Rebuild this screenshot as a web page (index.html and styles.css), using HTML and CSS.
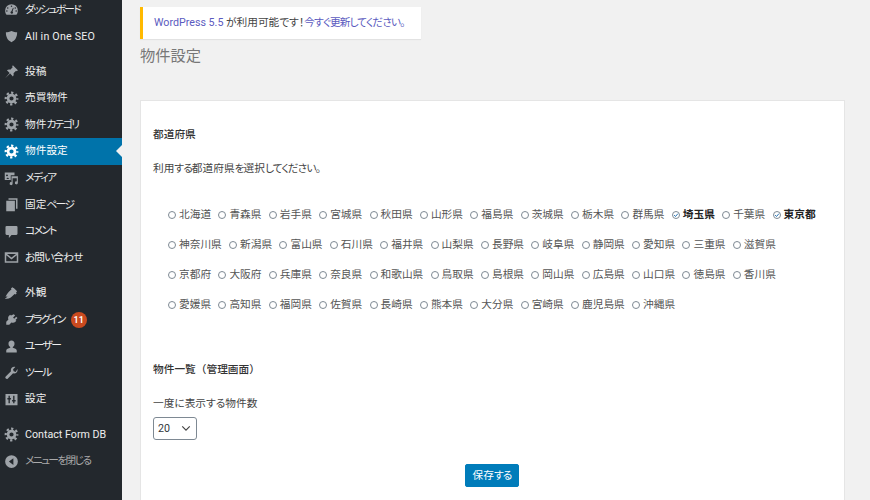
FILE: index.html
```html
<!DOCTYPE html>
<html lang="ja">
<head>
<meta charset="utf-8">
<title>物件設定</title>
<link rel="stylesheet" href="styles.css">
</head>
<body>
<svg class="sprite" width="0" height="0" aria-hidden="true">
  <symbol id="i-gear" viewBox="0 0 20 20">
    <circle cx="10" cy="10" r="4.6" fill="none" stroke="currentColor" stroke-width="3.6"/>
    <circle cx="10" cy="10" r="7.7" fill="none" stroke="currentColor" stroke-width="3" stroke-dasharray="3.05 3" stroke-dashoffset="1.5"/>
  </symbol>
  <symbol id="i-dash" viewBox="0 0 20 20">
    <path fill="currentColor" fill-rule="evenodd" d="M10 3a8.500 8.500 0 0 0-8.500 8.500c0 2 .7 3.900 1.900 5.400h13.200a8.500 8.500 0 0 0 1.900-5.400A8.500 8.500 0 0 0 10 3zM10 4.500a1 1 0 1 1 0 2 1 1 0 0 1 0-2zM5 7a1 1 0 1 1 0 2 1 1 0 0 1 0-2zM15 7a1 1 0 1 1 0 2 1 1 0 0 1 0-2zM3.800 11a1 1 0 1 1 0 2 1 1 0 0 1 0-2zM16.200 11a1 1 0 1 1 0 2 1 1 0 0 1 0-2zM12 7.500l.9.500-1.500 4.600a1.700 1.700 0 1 1-1.500-.3z"/>
  </symbol>
  <symbol id="i-shield" viewBox="0 0 20 20">
    <path fill="currentColor" d="M10 2.500c2.500 1.300 5 1.800 7.500 1.800 0 6-2 10.700-7.500 13.200C4.500 15 2.500 10.300 2.500 4.300c2.500 0 5-.5 7.500-1.800z"/>
  </symbol>
  <symbol id="i-pin" viewBox="0 0 20 20">
    <path fill="currentColor" d="M11.800 1.500l6.700 6.700-1.400 1.400-1-.7-3.400 3.300c.5 1.500.2 3.100-.8 4.300L8.200 12.800l-6.700 6.200 6-6.900-3.600-3.700c1.200-1 2.900-1.300 4.400-.8l3.300-3.400-.7-1z"/>
  </symbol>
  <symbol id="i-media" viewBox="0 0 20 20">
    <path fill="currentColor" fill-rule="evenodd" d="M1 2h13v3.500H9V12H1zM4 4.500a1.300 1.300 0 1 0 0 2.600 1.300 1.300 0 0 0 0-2.600zM3 10.500l2-2 1.500 1.500v.5zM10 7h8.500v8.800a2 2 0 1 1-1.500-1.900V9.500h-5.500v7.300a2 2 0 1 1-1.500-1.900z"/>
  </symbol>
  <symbol id="i-pages" viewBox="0 0 20 20">
    <path fill="currentColor" d="M6 1.500h12v14h-2v-12H6zM3 5h11.500v14H3z"/>
  </symbol>
  <symbol id="i-comment" viewBox="0 0 20 20">
    <path fill="currentColor" d="M3.500 2.500h13a1.500 1.500 0 0 1 1.500 1.500v9a1.500 1.500 0 0 1-1.500 1.500H10l-3.500 4v-4h-3A1.500 1.500 0 0 1 2 13V4a1.500 1.500 0 0 1 1.500-1.500z"/>
  </symbol>
  <symbol id="i-mail" viewBox="0 0 20 20">
    <path fill="currentColor" fill-rule="evenodd" d="M1 3h18v14H1zM4 5.200L10 10l6-4.800zM3 7v8h14V7l-7 5.500z"/>
  </symbol>
  <symbol id="i-brush" viewBox="0 0 20 20">
    <path fill="currentColor" d="M13 2.500l4.500 4.500-1.500 1.500 1 1-1.700 1.700-1.200-.7-3.500 3.500c-2.500 2.500-6 3.200-9.600 3.300l3.500-3.100-.4-.4-2 1c1-2.700 2.400-5 4.400-7l3.500-3.500-.7-1.200L11.500 1.500l1 1z"/>
  </symbol>
  <symbol id="i-plug" viewBox="0 0 20 20">
    <path fill="currentColor" d="M13.100 3l1.700 1.700-2.700 2.700 1.500 1.500 2.700-2.700L18 7.900l-2.700 2.700 1.200 1.200-1.300 1.300c-1.500 1.400-3.600 1.700-5.300.8L7 17H3v-4l2.900-2.900c-.8-1.700-.5-3.800.9-5.200L8.100 3.600l1.200 1.200z"/>
  </symbol>
  <symbol id="i-user" viewBox="0 0 20 20">
    <path fill="currentColor" d="M10 2a4 4 0 0 1 4 4.500c0 2-1.300 3.500-2.300 4.100v1.200c2.500.5 5.300 1.700 5.300 3.400V18H3v-2.800c0-1.700 2.800-2.900 5.300-3.400v-1.200C7.300 10 6 8.500 6 6.500A4 4 0 0 1 10 2z"/>
  </symbol>
  <symbol id="i-tool" viewBox="0 0 20 20">
    <path fill="currentColor" d="M17.800 5.200c.6 1.700.2 3.500-1 4.800-1.300 1.300-3.100 1.600-4.700 1l-6.900 7a1.900 1.900 0 0 1-2.900-2.700l7-7c-.5-1.600-.2-3.500 1.100-4.700 1.200-1.300 3-1.600 4.700-1.100l-3 3 .7 2.900 2.900.8z"/>
  </symbol>
  <symbol id="i-settings" viewBox="0 0 20 20">
    <path fill="currentColor" fill-rule="evenodd" d="M2 2.500h16v15H2zM6 5v3H4.500v2H6v5h1.800v-5h1.400V8H7.800V5zM12.200 5v5.500h-1.400v2h1.400V15H14v-2.500h1.500v-2H14V5z"/>
  </symbol>
  <symbol id="i-collapse" viewBox="0 0 20 20">
    <path fill="currentColor" fill-rule="evenodd" d="M10 1.500a8.500 8.500 0 1 1 0 17 8.500 8.500 0 0 1 0-17zM12.500 5.500L6.500 10l6 4.500z"/>
  </symbol>
</svg>

<nav class="sidebar">
  <ul class="menu">
    <li class="item"><svg class="icon"><use href="#i-dash"/></svg><span class="k-tight">ダッシュボード</span></li>
    <li class="item"><svg class="icon"><use href="#i-shield"/></svg><span class="latin">All in One SEO</span></li>
    <li class="item sep"><svg class="icon"><use href="#i-pin"/></svg><span>投稿</span></li>
    <li class="item"><svg class="icon"><use href="#i-gear"/></svg><span>売買物件</span></li>
    <li class="item"><svg class="icon"><use href="#i-gear"/></svg><span>物件<span class="k-tight">カテゴリ</span></span></li>
    <li class="item current"><svg class="icon"><use href="#i-gear"/></svg><span>物件設定</span></li>
    <li class="item"><svg class="icon"><use href="#i-media"/></svg><span class="k-tight">メディア</span></li>
    <li class="item"><svg class="icon"><use href="#i-pages"/></svg><span>固定<span class="k-tight">ページ</span></span></li>
    <li class="item"><svg class="icon"><use href="#i-comment"/></svg><span class="k-tight">コメント</span></li>
    <li class="item"><svg class="icon"><use href="#i-mail"/></svg><span class="k">お問い合わせ</span></li>
    <li class="item sep"><svg class="icon"><use href="#i-brush"/></svg><span>外観</span></li>
    <li class="item"><svg class="icon"><use href="#i-plug"/></svg><span class="k-tight">プラグイン</span><span class="badge">11</span></li>
    <li class="item"><svg class="icon"><use href="#i-user"/></svg><span class="k-tight">ユーザー</span></li>
    <li class="item"><svg class="icon"><use href="#i-tool"/></svg><span class="k-tight">ツール</span></li>
    <li class="item"><svg class="icon"><use href="#i-settings"/></svg><span>設定</span></li>
    <li class="item sep"><svg class="icon"><use href="#i-gear"/></svg><span>Contact Form DB</span></li>
    <li class="item muted"><svg class="icon"><use href="#i-collapse"/></svg><span class="k-tight">メニューを閉じる</span></li>
  </ul>
</nav>

<main class="content">
  <div class="notice"><a href="#">WordPress 5.5</a> が利用可能です！<a href="#" class="k">今すぐ更新してください。</a></div>
  <h1 class="title">物件設定</h1>
  <form class="card">
    <h2 class="heading">都道府県</h2>
    <p class="desc">利用<span class="k">する</span>都道府県<span class="k">を</span>選択<span class="k">してください。</span></p>
    <ul class="prefs">
      <li class="pref"><i class="radio"></i>北海道</li>
      <li class="pref"><i class="radio"></i>青森県</li>
      <li class="pref"><i class="radio"></i>岩手県</li>
      <li class="pref"><i class="radio"></i>宮城県</li>
      <li class="pref"><i class="radio"></i>秋田県</li>
      <li class="pref"><i class="radio"></i>山形県</li>
      <li class="pref"><i class="radio"></i>福島県</li>
      <li class="pref"><i class="radio"></i>茨城県</li>
      <li class="pref"><i class="radio"></i>栃木県</li>
      <li class="pref"><i class="radio"></i>群馬県</li>
      <li class="pref on"><i class="radio"><svg viewBox="0 0 10 10"><path d="M2.600 5l1.800 1.900 3-3.600"/></svg></i>埼玉県</li>
      <li class="pref"><i class="radio"></i>千葉県</li>
      <li class="pref on"><i class="radio"><svg viewBox="0 0 10 10"><path d="M2.600 5l1.800 1.900 3-3.600"/></svg></i>東京都</li>
      <li class="pref"><i class="radio"></i>神奈川県</li>
      <li class="pref"><i class="radio"></i>新潟県</li>
      <li class="pref"><i class="radio"></i>富山県</li>
      <li class="pref"><i class="radio"></i>石川県</li>
      <li class="pref"><i class="radio"></i>福井県</li>
      <li class="pref"><i class="radio"></i>山梨県</li>
      <li class="pref"><i class="radio"></i>長野県</li>
      <li class="pref"><i class="radio"></i>岐阜県</li>
      <li class="pref"><i class="radio"></i>静岡県</li>
      <li class="pref"><i class="radio"></i>愛知県</li>
      <li class="pref"><i class="radio"></i>三重県</li>
      <li class="pref"><i class="radio"></i>滋賀県</li>
      <li class="pref"><i class="radio"></i>京都府</li>
      <li class="pref"><i class="radio"></i>大阪府</li>
      <li class="pref"><i class="radio"></i>兵庫県</li>
      <li class="pref"><i class="radio"></i>奈良県</li>
      <li class="pref"><i class="radio"></i>和歌山県</li>
      <li class="pref"><i class="radio"></i>鳥取県</li>
      <li class="pref"><i class="radio"></i>島根県</li>
      <li class="pref"><i class="radio"></i>岡山県</li>
      <li class="pref"><i class="radio"></i>広島県</li>
      <li class="pref"><i class="radio"></i>山口県</li>
      <li class="pref"><i class="radio"></i>徳島県</li>
      <li class="pref"><i class="radio"></i>香川県</li>
      <li class="pref"><i class="radio"></i>愛媛県</li>
      <li class="pref"><i class="radio"></i>高知県</li>
      <li class="pref"><i class="radio"></i>福岡県</li>
      <li class="pref"><i class="radio"></i>佐賀県</li>
      <li class="pref"><i class="radio"></i>長崎県</li>
      <li class="pref"><i class="radio"></i>熊本県</li>
      <li class="pref"><i class="radio"></i>大分県</li>
      <li class="pref"><i class="radio"></i>宮崎県</li>
      <li class="pref"><i class="radio"></i>鹿児島県</li>
      <li class="pref"><i class="radio"></i>沖縄県</li>
    </ul>
    <h2 class="heading list-heading">物件一覧（管理画面）</h2>
    <p class="field-label">一度に表示する物件数</p>
    <div class="select"><span>20</span><svg viewBox="0 0 12 8"><path d="M1.500 1.500L6 6l4.500-4.500"/></svg></div>
    <div class="actions"><button type="button" class="save">保存<span class="k">する</span></button></div>
  </form>
</main>
</body>
</html>
```
FILE: styles.css
```css
* { box-sizing: border-box; }
html, body { margin: 0; height: 500px; overflow: hidden; }
body {
  display: flex;
  background: #f1f1f1;
  color: #444;
  font-family: Roboto, "Noto Sans CJK JP", sans-serif;
  font-feature-settings: "palt";
  font-size: 10.7px;
  line-height: 14px;
}
.k { letter-spacing: -.9px; }
.k-tight { letter-spacing: -1.6px; }
.latin { letter-spacing: .2px; }
.sprite { position: absolute; }
.sidebar { flex: 0 0 122px; height: 500px; background: #23282d; overflow: hidden; }
.menu { list-style: none; margin: -3.4px 0 0; padding: 0; }
.item {
  position: relative;
  display: flex;
  align-items: center;
  gap: 6px;
  height: 26.6px;
  padding-left: 4px;
  color: #eee;
}
.item.sep { margin-top: 8.6px; }
.icon { flex: none; width: 15px; height: 15px; color: #9ea3a8; }
.item.current { background: #0073aa; color: #fff; }
.item.current .icon { color: #fff; }
.item.current::after {
  content: "";
  position: absolute;
  right: 0;
  top: 50%;
  margin-top: -6px;
  border: 6px solid transparent;
  border-left-width: 0;
  border-right-color: #f1f1f1;
}
.item.muted { color: #aaa; }
.badge {
  width: 16px;
  height: 16px;
  border-radius: 50%;
  background: #ca4a1f;
  color: #fff;
  font-size: 9px;
  font-weight: 600;
  line-height: 16px;
  text-align: center;
}
.content { flex: 0 0 705px; margin-left: 18px; min-width: 0; }
.notice {
  width: 281px;
  height: 32px;
  margin-top: 7px;
  padding-left: 11px;
  border-left: 3px solid #ffb900;
  background: #fff;
  box-shadow: 0 1px 1px rgba(0, 0, 0, .06);
  line-height: 32px;
  white-space: nowrap;
}
.notice a { color: #5b5bc0; text-decoration: none; }
.title {
  margin: 7px 0 0;
  color: #777;
  font-size: 15.25px;
  font-weight: 400;
  line-height: 21px;
}
.card {
  height: 440px;
  margin: 33px 0 0;
  padding: 27px 12px 0;
  border: 1px solid #e5e5e5;
  background: #fff;
}
.heading { margin: 0; color: #333; font-size: 10.7px; font-weight: 500; line-height: 14px; }
.desc { margin: 20px 0 0; line-height: 14px; }
.prefs {
  display: flex;
  flex-wrap: wrap;
  column-gap: 7.3px;
  row-gap: 16px;
  width: 668px;
  margin: 32px 0 0;
  padding: 0 0 0 15px;
  list-style: none;
}
.pref { display: flex; align-items: center; gap: 3px; color: #555; white-space: nowrap; }
.pref.on { color: #222; font-weight: 700; }
.radio {
  flex: none;
  width: 8px;
  height: 8px;
  border: 1px solid #7e8993;
  border-radius: 50%;
  background: #fff;
}
.radio svg { display: block; width: 8px; height: 8px; margin: -1px; }
.radio svg path { fill: none; stroke: #2271b1; stroke-width: 1.2; }
.list-heading { margin-top: 51px; font-feature-settings: normal; }
.field-label { margin: 20px 0 0; }
.select {
  display: flex;
  align-items: center;
  justify-content: space-between;
  width: 44px;
  height: 23px;
  margin-top: 6px;
  padding: 0 5px 0 4px;
  border: 1px solid #7e8993;
  border-radius: 3px;
  background: #fff;
  color: #32373c;
}
.select svg { width: 10px; height: 7px; }
.select path { fill: none; stroke: #444; stroke-width: 1.4; }
.actions { display: flex; justify-content: center; margin-top: 24px; padding-right: 1px; }
.save {
  width: 54px;
  height: 23px;
  padding: 0;
  border: 1px solid #007cba;
  border-radius: 2px;
  background: #007cba;
  color: #fff;
  font: inherit;
  font-feature-settings: "palt";
  line-height: 21px;
}
```
